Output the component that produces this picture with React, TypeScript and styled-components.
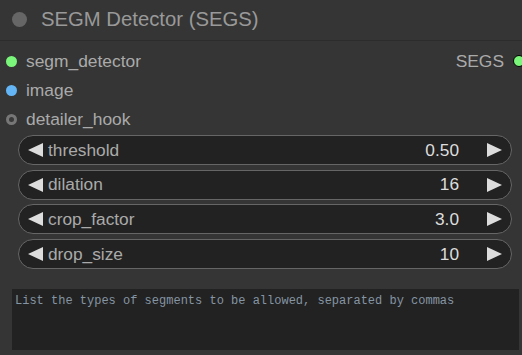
import React from "react";
import styled, { createGlobalStyle } from "styled-components";

const Global = createGlobalStyle`
  html, body { margin: 0; padding: 0; background: #353535; }
  body { font-family: "Liberation Sans", Arial, sans-serif; }
`;

const Node = styled.div`
  width: 522px;
  height: 355px;
  background: #353535;
  overflow: hidden;
  display: flex;
  flex-direction: column;
`;

const TitleBar = styled.div`
  height: 41px;
  box-sizing: border-box;
  border-bottom: 1px solid #2c2c2c;
  display: flex;
  align-items: center;
  padding-left: 12px;
  gap: 14px;
`;

const TitleDot = styled.div`
  width: 15px;
  height: 15px;
  border-radius: 50%;
  background: #666;
  margin-top: -2px;
`;

const Title = styled.div`
  font-size: 20.3px;
  color: #999;
  margin-top: -2px;
`;

const Slots = styled.div`
  padding-top: 6px;
  display: flex;
  flex-direction: column;
`;

const SlotRow = styled.div`
  height: 29px;
  display: flex;
  align-items: center;
  justify-content: space-between;
`;

const SlotSide = styled.div`
  display: flex;
  align-items: center;
  gap: 9px;
  font-size: 17.4px;
  color: #aaa;
`;

const Dot = styled.div<{ $color: string; $ring?: boolean; $border?: boolean }>`
  width: 11px;
  height: 11px;
  border-radius: 50%;
  box-sizing: border-box;
  margin-left: 6px;
  margin-top: -1px;
  background: ${(p) => (p.$ring ? "#3a3a3a" : p.$color)};
  border: ${(p) => (p.$ring ? "3px solid #777" : p.$border ? "1.5px solid #000" : "none")};
`;

const OutDot = styled(Dot)`
  width: 12px;
  height: 12px;
  margin-left: 0;
  margin-right: -3px;
`;

const Widgets = styled.div`
  margin-top: 1px;
  padding: 0 10px 0 18px;
  display: flex;
  flex-direction: column;
  gap: 4.7px;
`;

const Widget = styled.div`
  height: 30px;
  box-sizing: border-box;
  border: 1.5px solid #666;
  border-radius: 15px;
  background: #222;
  display: flex;
  align-items: center;
  padding: 0 9px 0 9px;
  font-size: 17.3px;
`;

const Arrow = styled.svg`
  width: 15px;
  height: 14px;
  flex: none;
`;

const Label = styled.span`
  color: #aaa;
  margin-left: 5px;
  flex: 1;
`;

const Value = styled.span`
  color: #ddd;
  margin-right: 28px;
`;

const TextBox = styled.textarea`
  margin: 20px 3px 0 12px;
  height: 61px;
  box-sizing: border-box;
  border: none;
  outline: none;
  resize: none;
  background: #222;
  color: #8595a3;
  font-family: "Liberation Mono", "DejaVu Sans Mono", monospace;
  font-size: 12px;
  line-height: 15px;
  padding: 5px 3px;
  overflow: hidden;
`;

const LeftArrow = () => (
  <Arrow viewBox="0 0 15 14">
    <polygon points="0,7 15,0 15,14" fill="#ddd" />
  </Arrow>
);

const RightArrow = () => (
  <Arrow viewBox="0 0 15 14">
    <polygon points="15,7 0,0 0,14" fill="#ddd" />
  </Arrow>
);

const widgets = [
  { name: "threshold", value: "0.50" },
  { name: "dilation", value: "16" },
  { name: "crop_factor", value: "3.0" },
  { name: "drop_size", value: "10" },
];

export default function App() {
  return (
    <Node>
      <Global />
      <TitleBar>
        <TitleDot />
        <Title>SEGM Detector (SEGS)</Title>
      </TitleBar>
      <Slots>
        <SlotRow>
          <SlotSide>
            <Dot $color="#7af77a" />
            segm_detector
          </SlotSide>
          <SlotSide>
            SEGS
            <OutDot $color="#7af77a" $border />
          </SlotSide>
        </SlotRow>
        <SlotRow>
          <SlotSide>
            <Dot $color="#64b5f6" />
            image
          </SlotSide>
        </SlotRow>
        <SlotRow>
          <SlotSide>
            <Dot $color="#777" $ring />
            detailer_hook
          </SlotSide>
        </SlotRow>
      </Slots>
      <Widgets>
        {widgets.map((w) => (
          <Widget key={w.name}>
            <LeftArrow />
            <Label>{w.name}</Label>
            <Value>{w.value}</Value>
            <RightArrow />
          </Widget>
        ))}
      </Widgets>
      <TextBox
        readOnly
        value="List the types of segments to be allowed, separated by commas"
      />
    </Node>
  );
}
